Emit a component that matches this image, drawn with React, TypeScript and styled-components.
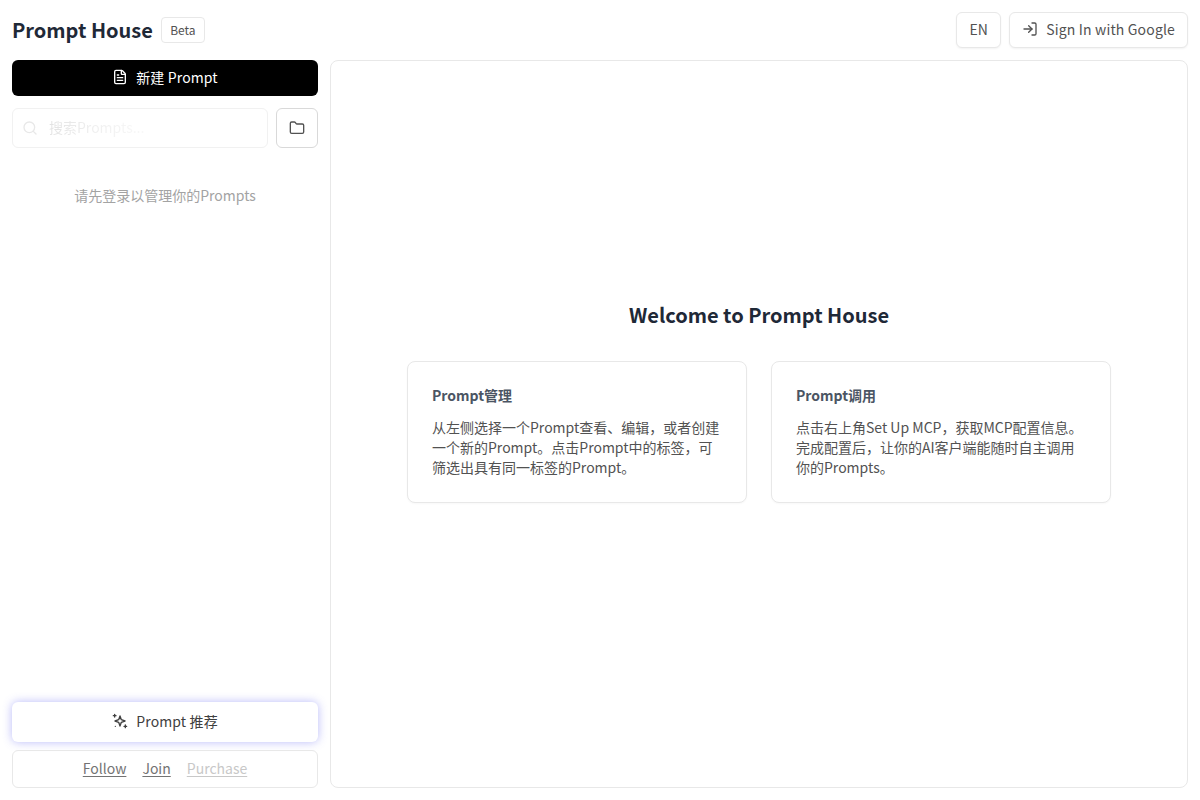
import React from "react";
import styled, { createGlobalStyle } from "styled-components";
import { FileText, Search, Folder, LogIn } from "lucide-react";

const Global = createGlobalStyle`
  html, body { margin: 0; padding: 0; background: #fff; }
  * { box-sizing: border-box; }
  body { font-family: "Noto Sans CJK SC", "Noto Sans", sans-serif; color: #111827; }
`;
const Page = styled.div`
  width: 1200px; height: 800px; padding: 12px; display: flex; flex-direction: column; gap: 12px; overflow: hidden;
`;
const Header = styled.header`
  height: 36px; display: flex; align-items: center; justify-content: space-between;
`;
const Brand = styled.div`display: flex; align-items: center; gap: 8px;`;
const Title = styled.h1`margin: 0; font-size: 20px; line-height: 28px; font-weight: 700; color: #1f2937;`;
const Badge = styled.span`
  height: 26px; width: 44px; padding-bottom: 1px; display: flex; align-items: center; justify-content: center; font-size: 12px; color: #525252;
  border: 1px solid #e8e8e8; border-radius: 4px; background: #fff;
`;
const Actions = styled.div`display: flex; gap: 8px;`;
const HeadButton = styled.button`
  height: 36px; padding: 0 12px 2px; display: flex; align-items: center; gap: 8px; font: inherit; font-size: 14px;
  letter-spacing: 0.16px; color: #525252; background: #fff; border: 1px solid #e8e8e8; border-radius: 6px;
  box-shadow: 0 1px 2px rgba(0,0,0,.05);
`;
const Body = styled.div`flex: 1; min-height: 0; display: flex; gap: 12px;`;
const Sidebar = styled.aside`width: 306px; display: flex; flex-direction: column; gap: 12px;`;
const NewButton = styled.button`
  height: 36px; padding: 0 0 2px; border: 0; border-radius: 6px; background: #000; color: #fff; font: inherit; font-size: 14px;
  letter-spacing: 0.12px; display: flex; align-items: center; justify-content: center; gap: 8px;
`;
const SearchRow = styled.div`display: flex; gap: 8px;`;
const SearchBox = styled.div`
  flex: 1; height: 40px; display: flex; align-items: center; gap: 11px; padding: 0 9px;
  border: 1px solid #f1f1f1; border-radius: 6px; color: #e8e8e8; font-size: 14px;
`;
const Placeholder = styled.span`
  padding-bottom: 2px; filter: blur(0.6px); color: transparent;
  background: linear-gradient(90deg, #e2e2e2 0%, #efefef 45%, #f8f8f8 100%);
  -webkit-background-clip: text; background-clip: text;
`;
const IconButton = styled.button`
  width: 42px; height: 40px; display: flex; align-items: center; justify-content: center; padding: 0;
  background: #fff; border: 1px solid #d9d9d9; border-radius: 6px; color: #525252;
`;
const Empty = styled.p`
  margin: 23px 0 0; text-align: center; font-size: 14px; line-height: 24px; color: #a3a3a3;
`;
const Spacer = styled.div`flex: 1;`;
const Bottom = styled.div`display: flex; flex-direction: column; gap: 8px;`;
const RecommendButton = styled.button`
  height: 40px; padding: 0 0 2px; border: 0; border-radius: 6px; background: #fff; color: #404040; font: inherit; font-size: 14px;
  letter-spacing: 0.12px; display: flex; align-items: center; justify-content: center; gap: 8px;
  box-shadow: 0 0 10px rgba(99,102,241,.45);
`;
const LinkBar = styled.nav`
  height: 38px; padding-bottom: 2px; display: flex; align-items: center; justify-content: center; gap: 16px;
  border: 1px solid #e8e8e8; border-radius: 6px; font-size: 14px;
`;
const BarLink = styled.a<{ $muted?: boolean }>`
  color: ${(p) => (p.$muted ? "#c8c8c8" : "#737373")}; text-decoration: underline; text-underline-offset: 2px;
`;
const Main = styled.main`
  flex: 1; border: 1px solid #e8e8e8; border-radius: 8px; display: flex; flex-direction: column;
  align-items: center; justify-content: center; gap: 32px; padding-bottom: 44px;
`;
const Welcome = styled.h2`margin: 0; font-size: 20px; line-height: 28px; font-weight: 600; color: #1f2937;`;
const Cards = styled.div`display: flex; gap: 24px;`;
const Card = styled.section`
  width: 340px; height: 142px; padding: 22px 24px; border: 1px solid #e8e8e8; border-radius: 8px; background: #fff;
  box-shadow: 0 1px 2px rgba(0,0,0,.03);
`;
const CardTitle = styled.h3`margin: 0 0 11px; font-size: 14px; line-height: 22px; font-weight: 600; color: #4b5563;`;
const CardText = styled.p`margin: 0; font-size: 14px; line-height: 20px; color: #525252;`;

const SparkleIcon = () => (
  <svg width="16" height="16" viewBox="0 0 24 24" fill="none" stroke="currentColor" strokeWidth="2" strokeLinecap="round" strokeLinejoin="round">
    <path d="M12 4.5l2 5.5 5.5 2-5.5 2-2 5.5-2-5.5-5.5-2 5.5-2 2-5.5z" />
    <path d="M4 2v4M2 4h4" />
    <path d="M20 18v4M18 20h4" />
    <path d="M5 20h.01" />
  </svg>
);

export default function App() {
  return (
    <Page>
      <Global />
      <Header>
        <Brand>
          <Title>Prompt House</Title>
          <Badge>Beta</Badge>
        </Brand>
        <Actions>
          <HeadButton>EN</HeadButton>
          <HeadButton><LogIn size={16} />Sign In with Google</HeadButton>
        </Actions>
      </Header>
      <Body>
        <Sidebar>
          <NewButton><FileText size={16} />新建 Prompt</NewButton>
          <SearchRow>
            <SearchBox><Search size={16} /><Placeholder>搜索Prompts...</Placeholder></SearchBox>
            <IconButton><Folder size={16} /></IconButton>
          </SearchRow>
          <Empty>请先登录以管理你的Prompts</Empty>
          <Spacer />
          <Bottom>
            <RecommendButton><SparkleIcon />Prompt 推荐</RecommendButton>
            <LinkBar>
              <BarLink>Follow</BarLink>
              <BarLink>Join</BarLink>
              <BarLink $muted>Purchase</BarLink>
            </LinkBar>
          </Bottom>
        </Sidebar>
        <Main>
          <Welcome>Welcome to Prompt House</Welcome>
          <Cards>
            <Card>
              <CardTitle>Prompt管理</CardTitle>
              <CardText>从左侧选择一个Prompt查看、编辑，或者创建一个新的Prompt。点击Prompt中的标签，可筛选出具有同一标签的Prompt。</CardText>
            </Card>
            <Card>
              <CardTitle>Prompt调用</CardTitle>
              <CardText>点击右上角Set Up MCP，获取MCP配置信息。完成配置后，让你的AI客户端能随时自主调用你的Prompts。</CardText>
            </Card>
          </Cards>
        </Main>
      </Body>
    </Page>
  );
}
